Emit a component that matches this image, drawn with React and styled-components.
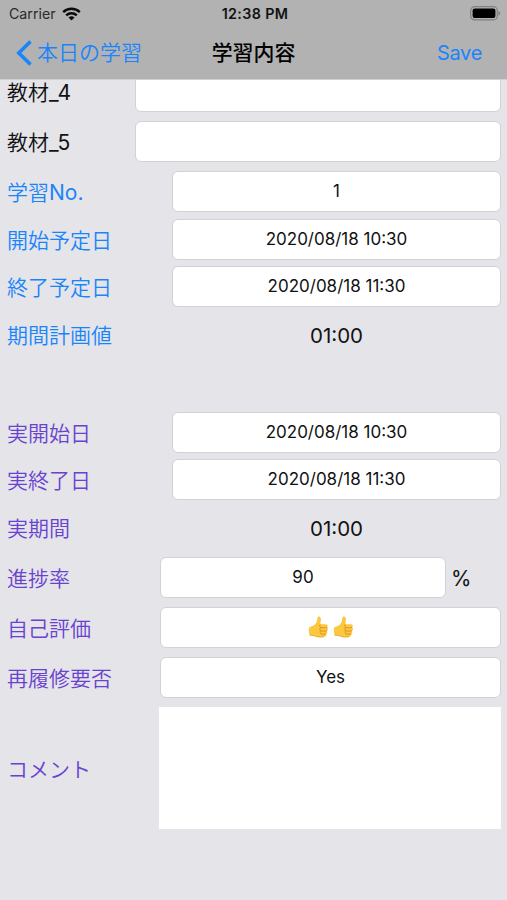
import React from 'react';
import styled, { createGlobalStyle } from 'styled-components';

const Colors = {
  bar: '#b2b2b2',
  background: '#e4e4e9',
  border: '#d2d2d6',
  black: '#111112',
  blue: '#1a84fb',
  purple: '#6a42d0',
  white: '#ffffff',
};

// top is the gap to the row above it
const rows = [
  { label: '教材_4', kind: 'field', color: Colors.black, top: -9, start: 135 },
  { label: '教材_5', kind: 'field', color: Colors.black, top: 9, start: 135 },
  { label: '学習No.', kind: 'field', color: Colors.blue, top: 9, start: 172, value: '1' },
  { label: '開始予定日', kind: 'field', color: Colors.blue, top: 7, start: 172, value: '2020/08/18 10:30' },
  { label: '終了予定日', kind: 'field', color: Colors.blue, top: 6, start: 172, value: '2020/08/18 11:30' },
  { label: '期間計画値', kind: 'plain', color: Colors.blue, top: 7, start: 172, value: '01:00' },
  { label: '実開始日', kind: 'field', color: Colors.purple, top: 57, start: 172, value: '2020/08/18 10:30' },
  { label: '実終了日', kind: 'field', color: Colors.purple, top: 6, start: 172, value: '2020/08/18 11:30' },
  { label: '実期間', kind: 'plain', color: Colors.purple, top: 7, start: 172, value: '01:00' },
  { label: '進捗率', kind: 'field', color: Colors.purple, top: 9, start: 160, value: '90', unit: '%' },
  { label: '自己評価', kind: 'rating', color: Colors.purple, top: 9, start: 160, value: 2 },
  { label: '再履修要否', kind: 'field', color: Colors.purple, top: 9, start: 160, value: 'Yes' },
];

const WifiIcon = () => (
  <svg width="19" height="14" viewBox="0 0 19 14" fill="none" stroke="#0a0a0a" strokeWidth="2.4">
    <path d="M1.2 5.1C5.8 0.7 13.2 0.7 17.8 5.1" />
    <path d="M4.2 8.3C7.2 5.5 11.8 5.5 14.8 8.3" />
    <path d="M9.5 13.4L6.5 10.4C8.2 8.9 10.8 8.9 12.5 10.4Z" fill="#0a0a0a" stroke="none" />
  </svg>
);

const BatteryIcon = () => (
  <svg width="31" height="15" viewBox="0 0 31 15">
    <rect x="0.7" y="0.7" width="26.6" height="13.2" rx="4" fill="none" stroke="#808080" strokeWidth="1.2" />
    <rect x="2.6" y="2.6" width="22.8" height="9.4" rx="2" fill="#000" />
    <path d="M28.5 5C30.7 5.8 30.7 8.8 28.5 9.6Z" fill="#808080" />
  </svg>
);

const BackIcon = () => (
  <svg width="16" height="26" viewBox="0 0 16 26" fill="none" stroke={Colors.blue} strokeWidth="3.6">
    <path d="M14.5 1.5L2.8 13L14.5 24.5" />
  </svg>
);

const ThumbIcon = () => (
  <svg width="21" height="22" viewBox="0 0 21 23">
    <path
      d="M1 11.5C3.8 11 6.6 9.4 8 7.2C9 5.6 9 3.3 9.4 1.5C9.8 0 12.4 0.2 12.9 2.4C13.3 4.6 12.7 6.7 12.4 8.6H18C20.3 8.6 20.7 11.2 19.5 12C21 13 20.6 15 19.3 15.6C20.3 16.8 19.6 18.4 18.5 18.8C19 20.3 18 21.6 16.3 21.7C12.5 22.2 8.7 22 6.3 20.6C4.5 19.9 2.8 20.2 1.3 20C0.2 17.5 0 13.8 1 11.5Z"
      fill="#fcc840"
    />
    <path
      d="M19.5 12C17.4 12.6 14.8 12.4 12.6 12.1M19.3 15.6C17.4 16 14.9 15.8 12.7 15.5M18.5 18.8C16.7 19.2 14.8 19 13 18.7M12.4 8.8C11.4 10 11.8 11.5 12.6 12.1C11.7 13.3 11.8 14.7 12.7 15.5C11.9 16.7 12.1 18 13 18.7"
      fill="none"
      stroke="#d99023"
      strokeWidth="1"
    />
    <path d="M1.3 20C2.8 20.2 4.5 19.9 6.3 20.6C8.7 22 12.5 22.2 16.3 21.7" fill="none" stroke="#e9a52b" strokeWidth="1" />
  </svg>
);

const FormRow = ({ row }) => (
  <Row $top={row.top} $start={row.start}>
    <Label $color={row.color}>{row.label}</Label>
    {row.kind === 'plain' && <PlainValue>{row.value}</PlainValue>}
    {row.kind === 'field' && <Field>{row.value}</Field>}
    {row.kind === 'rating' && (
      <Field role="img" aria-label="👍👍">
        <Thumbs>
          {Array.from({ length: row.value }, (_, i) => <ThumbIcon key={i} />)}
        </Thumbs>
      </Field>
    )}
    {row.unit && <Unit>{row.unit}</Unit>}
  </Row>
);

const App = () => (
  <Screen>
    <GlobalStyle />
    <Header>
      <StatusBar>
        <Carrier>
          Carrier
          <WifiIcon />
        </Carrier>
        <Clock>12:38 PM</Clock>
        <Battery>
          <BatteryIcon />
        </Battery>
      </StatusBar>
      <NavBar>
        <BackButton>
          <BackIcon />
          本日の学習
        </BackButton>
        <Title>学習内容</Title>
        <SaveButton>Save</SaveButton>
      </NavBar>
    </Header>
    <Form>
      {rows.map(row => <FormRow key={row.label} row={row} />)}
      <CommentRow>
        <Label $color={Colors.purple}>コメント</Label>
        <Comment />
      </CommentRow>
    </Form>
  </Screen>
);

const GlobalStyle = createGlobalStyle`
  * {
    box-sizing: border-box;
  }

  body {
    margin: 0;
    background-color: ${Colors.background};
    font-family: Inter, "Noto Sans CJK JP", sans-serif;
  }
`;

const Screen = styled.div`
  display: flex;
  flex-direction: column;
  width: 507px;
  height: 900px;
  overflow: hidden;
  color: ${Colors.black};
  background-color: ${Colors.background};
`;

const Header = styled.header`
  flex: none;
  height: 80px;
  background-color: ${Colors.bar};
  border-bottom: 1px solid #cfcfd1;
`;

const StatusBar = styled.div`
  display: grid;
  grid-template-columns: 1fr auto 1fr;
  align-items: center;
  height: 27px;
  padding: 0 6px 0 9px;
`;

const Carrier = styled.div`
  display: flex;
  align-items: center;
  gap: 6px;
  font-size: 14.2px;
  color: #2a2a2a;
`;

const Clock = styled.div`
  font-size: 14.3px;
  font-weight: 600;
  letter-spacing: 0.35px;
`;

const Battery = styled.div`
  display: flex;
  justify-content: flex-end;
`;

const NavBar = styled.nav`
  display: grid;
  grid-template-columns: 1fr auto 1fr;
  align-items: center;
  height: 51px;
  padding: 0 16px;
  font-size: 21px;
  line-height: 30px;
`;

const BackButton = styled.div`
  display: flex;
  align-items: center;
  gap: 5px;
  font-family: Inter, "Noto Sans CJK JP DemiLight", "Noto Sans CJK JP", sans-serif;
  color: ${Colors.blue};
`;

const Title = styled.div`
  font-size: 20.9px;
  font-weight: 500;
  color: #000;
`;

const SaveButton = styled.div`
  justify-self: end;
  padding-right: 9px;
  font-size: 20px;
  letter-spacing: -0.3px;
  color: ${Colors.blue};
`;

const Form = styled.main`
  flex: 1;
  min-height: 0;
  overflow: hidden;
  display: flex;
  flex-direction: column;
`;

const Row = styled.div`
  flex: none;
  display: grid;
  grid-template-columns: ${({ $start }) => $start - 7}px 1fr auto;
  align-items: center;
  height: 41px;
  margin-top: ${({ $top }) => $top}px;
  padding: 0 6px 0 7px;
`;

const Label = styled.div`
  padding-top: 3px;
  font-family: Inter, "Noto Sans CJK JP DemiLight", "Noto Sans CJK JP", sans-serif;
  font-size: 21px;
  line-height: 30px;
  white-space: nowrap;
  color: ${({ $color }) => $color};
`;

const Field = styled.div`
  display: flex;
  align-items: center;
  justify-content: center;
  height: 41px;
  padding-bottom: 2px;
  font-size: 17px;
  background-color: ${Colors.white};
  border: 1px solid ${Colors.border};
  border-radius: 6px;
`;

const PlainValue = styled.div`
  padding-top: 1px;
  font-size: 20.5px;
  text-align: center;
`;

const Unit = styled.div`
  width: 55px;
  padding: 1px 0 0 5px;
  font-size: 20.8px;
`;

const Thumbs = styled.div`
  display: flex;
  gap: 4px;
`;

const CommentRow = styled.div`
  display: grid;
  grid-template-columns: 152px 1fr;
  align-items: center;
  margin-top: 9px;
  padding: 0 6px 0 7px;
`;

const Comment = styled.div`
  height: 122px;
  background-color: ${Colors.white};
`;

export default App;
